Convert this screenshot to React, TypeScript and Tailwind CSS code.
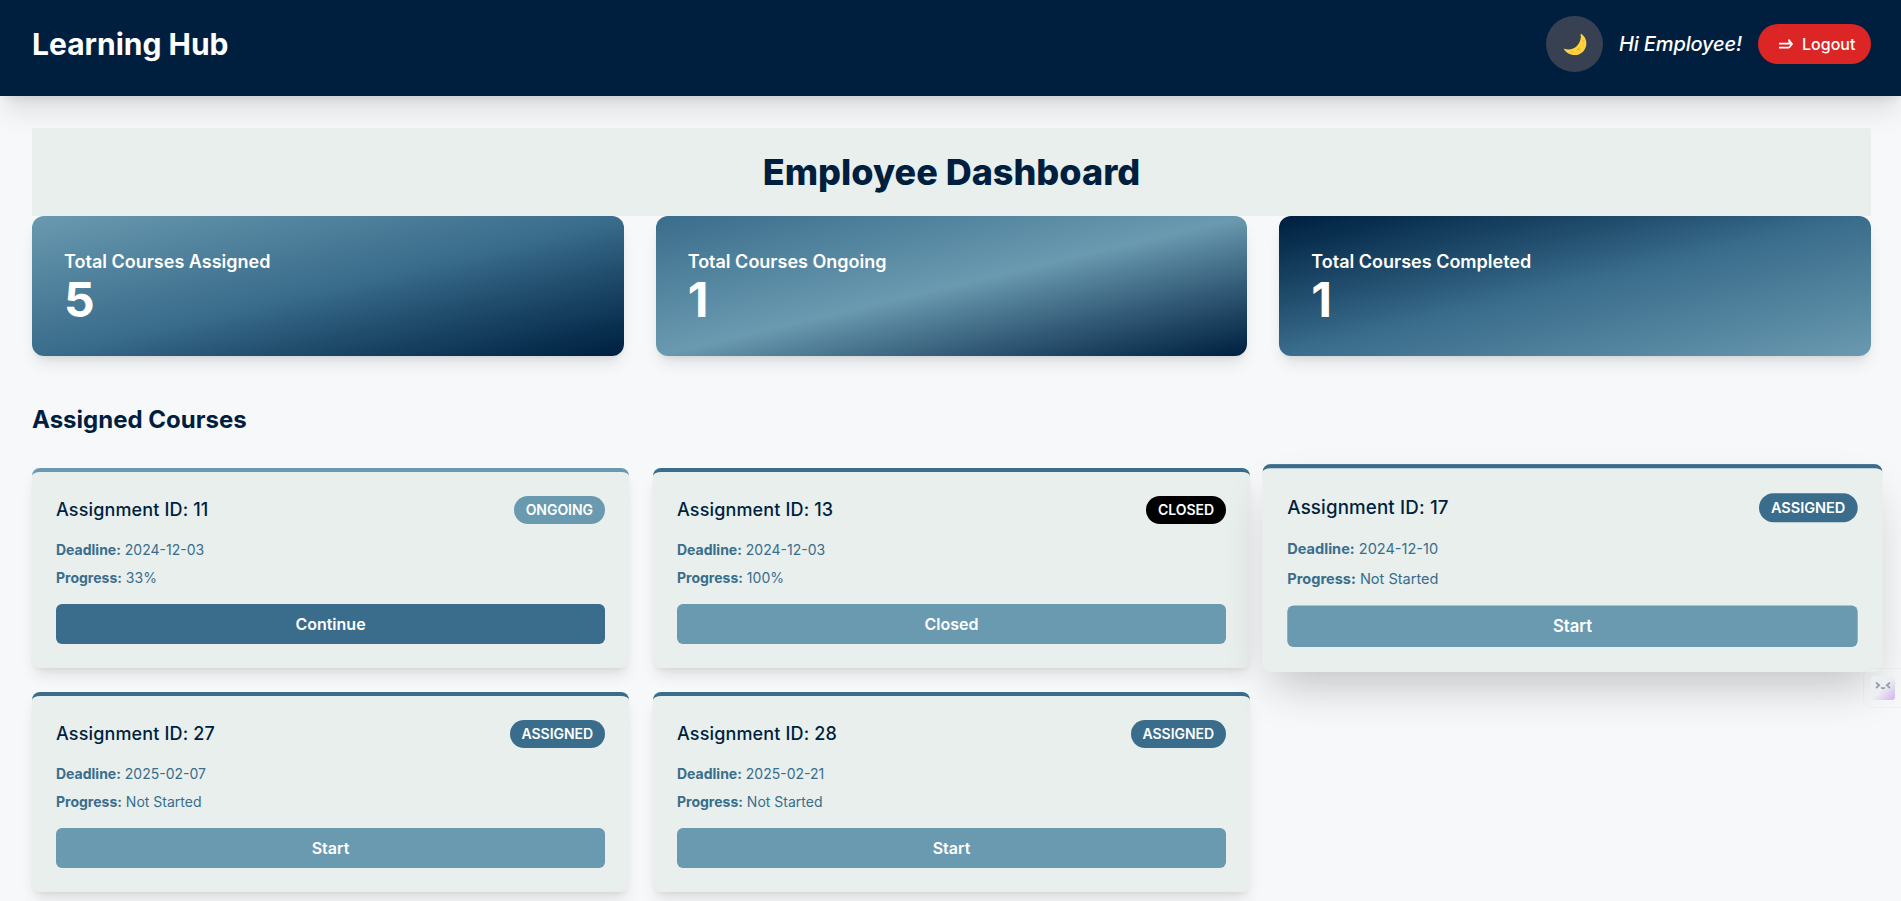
import React from "react";

type Course = {
  id: number;
  status: "ONGOING" | "CLOSED" | "ASSIGNED";
  deadline: string;
  progress: string;
  action: string;
  raised?: boolean;
};

const courses: Course[] = [
  { id: 11, status: "ONGOING", deadline: "2024-12-03", progress: "33%", action: "Continue" },
  { id: 13, status: "CLOSED", deadline: "2024-12-03", progress: "100%", action: "Closed" },
  { id: 17, status: "ASSIGNED", deadline: "2024-12-10", progress: "Not Started", action: "Start", raised: true },
  { id: 27, status: "ASSIGNED", deadline: "2025-02-07", progress: "Not Started", action: "Start" },
  { id: 28, status: "ASSIGNED", deadline: "2025-02-21", progress: "Not Started", action: "Start" },
];

const stats = [
  { label: "Total Courses Assigned", value: 5, tone: "from-[#6a9ab0] via-[#3a6d8c] to-[#001f3f]" },
  { label: "Total Courses Ongoing", value: 1, tone: "from-[#3a6d8c] via-[#6a9ab0] to-[#001f3f]" },
  { label: "Total Courses Completed", value: 1, tone: "from-[#001f3f] via-[#3a6d8c] to-[#6a9ab0]" },
];

const badgeTone = { ONGOING: "bg-[#6a9ab0]", CLOSED: "bg-black", ASSIGNED: "bg-[#3a6d8c]" };

function Moon() {
  return (
    <svg width="24" height="24" viewBox="0 0 24 24" className="ml-0.5">
      <path
        d="M18.200 1.700C21.600 4 23.400 7.300 23.400 11.200c0 6.500-5.100 11.900-11.600 11.900C6.900 23.100 2.300 20.600.7 16.600c4.800 1.700 9.800.9 13.200-2.600C17.200 10.700 18.500 6.400 17.600 2.100z"
        fill="#ffd43b"
      />
      <circle cx="15.800" cy="17.300" r="2" fill="#f8bd35" />
      <circle cx="20.300" cy="9" r="1.200" fill="#f8bd35" />
      <circle cx="20.500" cy="13.500" r="0.900" fill="#f8bd35" />
      <circle cx="9" cy="19.800" r="1.200" fill="#f8bd35" />
    </svg>
  );
}

function CourseCard({ c }: { c: Course }) {
  return (
    <div
      className={`rounded-lg border-t-4 bg-[#e8efec] p-6 ${c.status === "ONGOING" ? "border-[#6a9ab0]" : "border-[#3a6d8c]"} ${
        c.raised ? "z-10 scale-[1.039] shadow-[0_22px_43px_-10px_rgba(0,0,0,0.24)]" : "shadow-lg"
      }`}
    >
      <div className="mb-4 flex items-center justify-between">
        <h3 className="text-lg font-medium tracking-[0.008em] text-[#001f3f]">Assignment ID: {c.id}</h3>
        <span className={`rounded-full px-3 py-1 text-sm font-semibold tracking-[-0.003em] text-white ${badgeTone[c.status]}`}>{c.status}</span>
      </div>
      <p className="mb-2 text-sm text-[#3a6d8c]">
        <strong>Deadline:</strong> {c.deadline}
      </p>
      <p className="mb-4 text-sm text-[#3a6d8c]">
        <strong>Progress:</strong> {c.progress}
      </p>
      <button className={`block w-full rounded-md py-2 font-semibold text-white ${c.status === "ONGOING" ? "bg-[#3a6d8c]" : "bg-[#6a9ab0]"}`}>
        {c.action}
      </button>
    </div>
  );
}

function AssistantWidget() {
  return (
    <div className="absolute top-[668px] left-[1863px] z-20 h-10 w-12 rounded-l-lg border border-black/[0.025] pt-[7px] pl-[7px]">
      <div className="h-6 w-6 rounded-[3px] bg-linear-to-br from-[#eceff2] from-50% to-[#d0b4ee]">
        <svg width="24" height="24" viewBox="0 0 24 24" fill="none" stroke="#9b9fa6" strokeWidth="1.800">
          <path d="M5 6.500l3.200 2.700L5 12M19 6.500l-3.200 2.700L19 12M10.200 11.300q1.800 2 3.600 0" />
        </svg>
      </div>
    </div>
  );
}

export default function App() {
  return (
    <div className="relative h-[901px] w-[1901px] overflow-hidden bg-[#f7f8fa] font-['Inter',sans-serif]">
      <div className="w-[1903px]">
        <header className="flex h-24 items-center justify-between bg-[#001f3f] px-8 pt-4 pb-6 text-white shadow-[0_20px_25px_-5px_rgba(0,0,0,0.1),0_8px_10px_-6px_rgba(0,0,0,0.1)]">
          <h1 className="text-3xl font-bold">Learning Hub</h1>
          <div className="flex items-center gap-4">
            <button className="flex h-14 w-[57px] items-center justify-center rounded-full bg-[#374151]">
              <Moon />
            </button>
            <span className="text-xl font-medium tracking-[-0.007em] italic">Hi Employee!</span>
            <button className="flex h-10 w-[113px] items-center rounded-full bg-[#dc2626] pl-5 font-medium">
              <svg width="16" height="16" viewBox="0 0 16 16" className="mr-2" fill="none" stroke="white" strokeWidth="1.700">
                <path d="M1 7.700h12M1 11.700h10M10.500 3.500l3.500 4.400-3 3.900" />
                <path d="M10.500 3.500v4.200H14z" fill="white" stroke="none" />
              </svg>
              Logout
            </button>
          </div>
        </header>
        <main className="px-8 pt-8">
          <h2 className="relative bg-[#e8efec] p-6 text-center text-4xl font-extrabold text-[#001f3f]">Employee Dashboard</h2>
          <section className="grid grid-cols-3 gap-8">
            {stats.map((s) => (
              <div key={s.label} className={`rounded-xl bg-linear-to-br p-8 text-white shadow-lg ${s.tone}`}>
                <h3 className="text-lg font-semibold">{s.label}</h3>
                <p className="text-5xl font-bold">{s.value}</p>
              </div>
            ))}
          </section>
          <h2 className="mt-12 mb-8 text-2xl font-bold text-[#001f3f]">Assigned Courses</h2>
          <section className="grid grid-cols-3 gap-6">
            {courses.map((c) => (
              <CourseCard key={c.id} c={c} />
            ))}
          </section>
        </main>
      </div>
      <AssistantWidget />
    </div>
  );
}
